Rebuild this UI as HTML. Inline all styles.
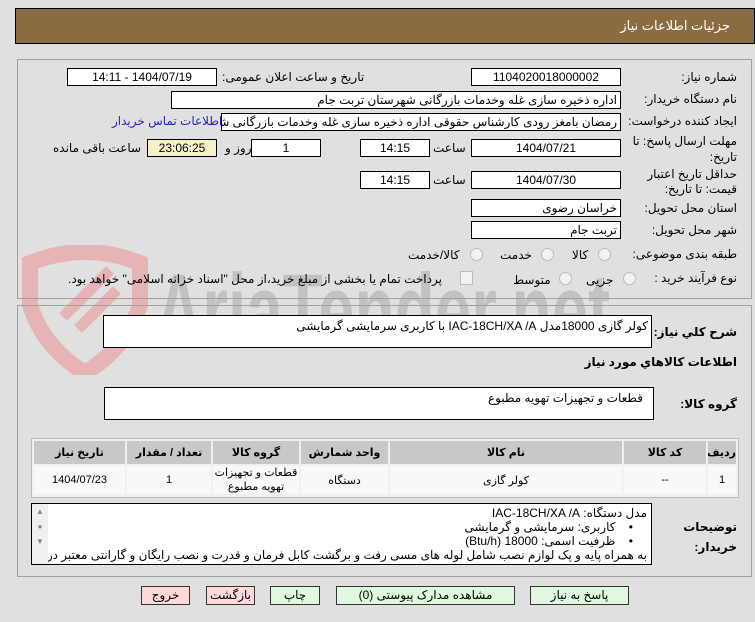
<!DOCTYPE html>
<html><head><meta charset="utf-8">
<style>
*{margin:0;padding:0;box-sizing:border-box}
body{width:755px;height:622px;background:#e0e0e0;font-family:"Liberation Sans","DejaVu Sans",sans-serif;font-size:12px;color:#000;position:relative;overflow:hidden;direction:rtl}
.a{position:absolute;white-space:nowrap}
.in{position:absolute;background:#fff;border:1px solid #000;height:18px;line-height:16px;padding:0 3px;white-space:nowrap;overflow:hidden;font-size:12px}
.c{text-align:center}
.lbl{position:absolute;right:18px;white-space:nowrap}
.radio{position:absolute;width:13px;height:13px;border-radius:50%;border:1px solid #bbb;background:#f2f2f2}
.btn{position:absolute;height:19px;border:1px solid #333;text-align:center;line-height:17px;font-size:12px}
table{border-collapse:separate;border-spacing:2px;table-layout:fixed}
td,th{text-align:center;font-size:11px;overflow:hidden}
th{background:#c8c8c8;height:23px;font-weight:bold}
td{background:#f8f8f8;height:28px}
</style></head><body>
<div class="a" style="left:15px;top:8px;width:740px;height:36px;background:#8b6c42;border:1px solid #000"></div>
<div class="a" style="right:25px;top:18px;color:#fff;font-size:13px">جزئیات اطلاعات نیاز</div>

<svg class="a" style="left:15px;top:245px" width="740" height="130" viewBox="0 0 740 130">
<path d="M15 18 Q70 -4 125 18 L125 60 Q112 102 70 128 Q28 102 15 60 Z" fill="none" stroke="#e6b4b4" stroke-width="16"/>
<path d="M48 72 L95 25 M63 84 L102 45" stroke="#e6b4b4" stroke-width="11"/>
<text x="140" y="102" font-family="Liberation Sans" font-weight="bold" font-size="105" fill="#c2c2c2" direction="ltr" textLength="455" lengthAdjust="spacingAndGlyphs">AriaTender.net</text>
</svg>

<div class="a" style="left:17px;top:59px;width:735px;height:240px;border:1px solid #a0a0a0"></div>
<div class="a" style="left:17px;top:305px;width:735px;height:272px;border:1px solid #a0a0a0"></div>

<div class="lbl" style="top:70px">شماره نیاز:</div>
<div class="in c" style="left:471px;top:68px;width:150px">1104020018000002</div>
<div class="a" style="left:222px;top:70px">تاریخ و ساعت اعلان عمومی:</div>
<div class="in c" style="left:67px;top:68px;width:150px">1404/07/19 - 14:11</div>

<div class="lbl" style="top:92px">نام دستگاه خریدار:</div>
<div class="in" style="left:171px;top:91px;width:450px">اداره ذخیره سازی غله وخدمات بازرگانی شهرستان تربت جام</div>

<div class="lbl" style="top:114px">ایجاد کننده درخواست:</div>
<div class="in" style="left:221px;top:113px;width:400px">رمضان بامغز رودی کارشناس حقوقی اداره ذخیره سازی غله وخدمات بازرگانی شهرستان</div>
<div class="a" style="left:112px;top:114px;color:#2222cc">اطلاعات تماس خریدار</div>

<div class="lbl" style="top:134px">مهلت ارسال پاسخ: تا</div>
<div class="lbl" style="top:150px">تاریخ:</div>
<div class="in c" style="left:471px;top:139px;width:150px">1404/07/21</div>
<div class="a" style="left:433px;top:141px">ساعت</div>
<div class="in c" style="left:360px;top:139px;width:70px">14:15</div>
<div class="in c" style="left:251px;top:139px;width:70px">1</div>
<div class="a" style="left:225px;top:141px">روز و</div>
<div class="in c" style="left:147px;top:139px;width:70px;background:#f5f2c8">23:06:25</div>
<div class="a" style="left:53px;top:141px">ساعت باقی مانده</div>

<div class="lbl" style="top:167px">حداقل تاریخ اعتبار</div>
<div class="lbl" style="top:182px">قیمت: تا تاریخ:</div>
<div class="in c" style="left:471px;top:171px;width:150px">1404/07/30</div>
<div class="a" style="left:433px;top:173px">ساعت</div>
<div class="in c" style="left:360px;top:171px;width:70px">14:15</div>

<div class="lbl" style="top:201px">استان محل تحویل:</div>
<div class="in" style="left:471px;top:199px;width:150px">خراسان رضوی</div>
<div class="lbl" style="top:223px">شهر محل تحویل:</div>
<div class="in" style="left:471px;top:221px;width:150px">تربت جام</div>

<div class="lbl" style="top:247px">طبقه بندی موضوعی:</div>
<div class="radio" style="left:598px;top:248px"></div><div class="a" style="left:572px;top:248px">کالا</div>
<div class="radio" style="left:541px;top:248px"></div><div class="a" style="left:500px;top:248px">خدمت</div>
<div class="radio" style="left:470px;top:248px"></div><div class="a" style="left:408px;top:248px">کالا/خدمت</div>

<div class="lbl" style="top:271px">نوع فرآیند خرید :</div>
<div class="radio" style="left:623px;top:272px"></div><div class="a" style="left:586px;top:273px">جزیی</div>
<div class="radio" style="left:559px;top:272px"></div><div class="a" style="left:513px;top:273px">متوسط</div>
<div class="a" style="left:460px;top:271px;width:13px;height:14px;border:1px solid #bbb;background:#f2f2f2"></div>
<div class="a" style="left:68px;top:272px">پرداخت تمام یا بخشی از مبلغ خرید،از محل "اسناد خزانه اسلامی" خواهد بود.</div>

<div class="lbl" style="top:325px;font-weight:bold">شرح کلي نیاز:</div>
<div class="in" style="left:103px;top:315px;width:549px;height:33px;background:#fff;line-height:20px">کولر گازی 18000مدل IAC-18CH/XA /A با کاربری سرمایشی گرمایشی</div>
<div class="lbl" style="top:355px;font-weight:bold">اطلاعات کالاهاي مورد نیاز</div>
<div class="lbl" style="top:397px;font-weight:bold">گروه کالا:</div>
<div class="in" style="left:104px;top:387px;width:550px;height:33px;line-height:20px;padding-right:10px">قطعات و تجهیزات تهویه مطبوع</div>

<div class="a" style="left:31px;top:438px;width:708px;height:60px;background:#f0f0f0;border:1px solid #bbb">
<table style="width:100%">
<tr><th style="width:28px">ردیف</th><th style="width:82px">کد کالا</th><th>نام کالا</th><th style="width:87px">واحد شمارش</th><th style="width:86px">گروه کالا</th><th style="width:84px">تعداد / مقدار</th><th style="width:91px">تاریخ نیاز</th></tr>
<tr><td>1</td><td>--</td><td>کولر گازی</td><td>دستگاه</td><td style="line-height:14px;white-space:normal">قطعات و تجهیزات تهویه مطبوع</td><td>1</td><td>1404/07/23</td></tr>
</table></div>

<div class="lbl" style="top:520px;font-weight:bold">توضیحات</div>
<div class="lbl" style="top:540px;font-weight:bold">خریدار:</div>
<div class="a" style="left:31px;top:503px;width:621px;height:62px;background:#fff;border:1px solid #000;overflow:hidden;font-size:12px;line-height:14px;padding:2px 4px 0 0">
<div>مدل دستگاه: IAC-18CH/XA /A</div>
<div style="padding-right:14px">•&nbsp;&nbsp;&nbsp; کاربری: سرمایشی و گرمایشی</div>
<div style="padding-right:14px">•&nbsp;&nbsp;&nbsp; ظرفیت اسمی: 18000 (Btu/h)</div>
<div>به همراه پایه و پک لوازم نصب شامل لوله های مسی رفت و برگشت کابل فرمان و قدرت و نصب رایگان و گارانتی معتبر در</div>
<div class="a" style="left:0;top:0;width:16px;height:60px;background:#f0f0f0;color:#888;font-size:8px;text-align:center;line-height:15px">▲<br>●<br>▼</div>
</div>

<div class="btn" style="left:530px;top:586px;width:99px;background:#e0f8e0">پاسخ به نیاز</div>
<div class="btn" style="left:336px;top:586px;width:179px;background:#e0f8e0">مشاهده مدارک پیوستی (0)</div>
<div class="btn" style="left:270px;top:586px;width:50px;background:#e0f8e0">چاپ</div>
<div class="btn" style="left:206px;top:586px;width:49px;background:#ffd8d8">بازگشت</div>
<div class="btn" style="left:141px;top:586px;width:49px;background:#ffd8d8">خروج</div>
</body></html>
